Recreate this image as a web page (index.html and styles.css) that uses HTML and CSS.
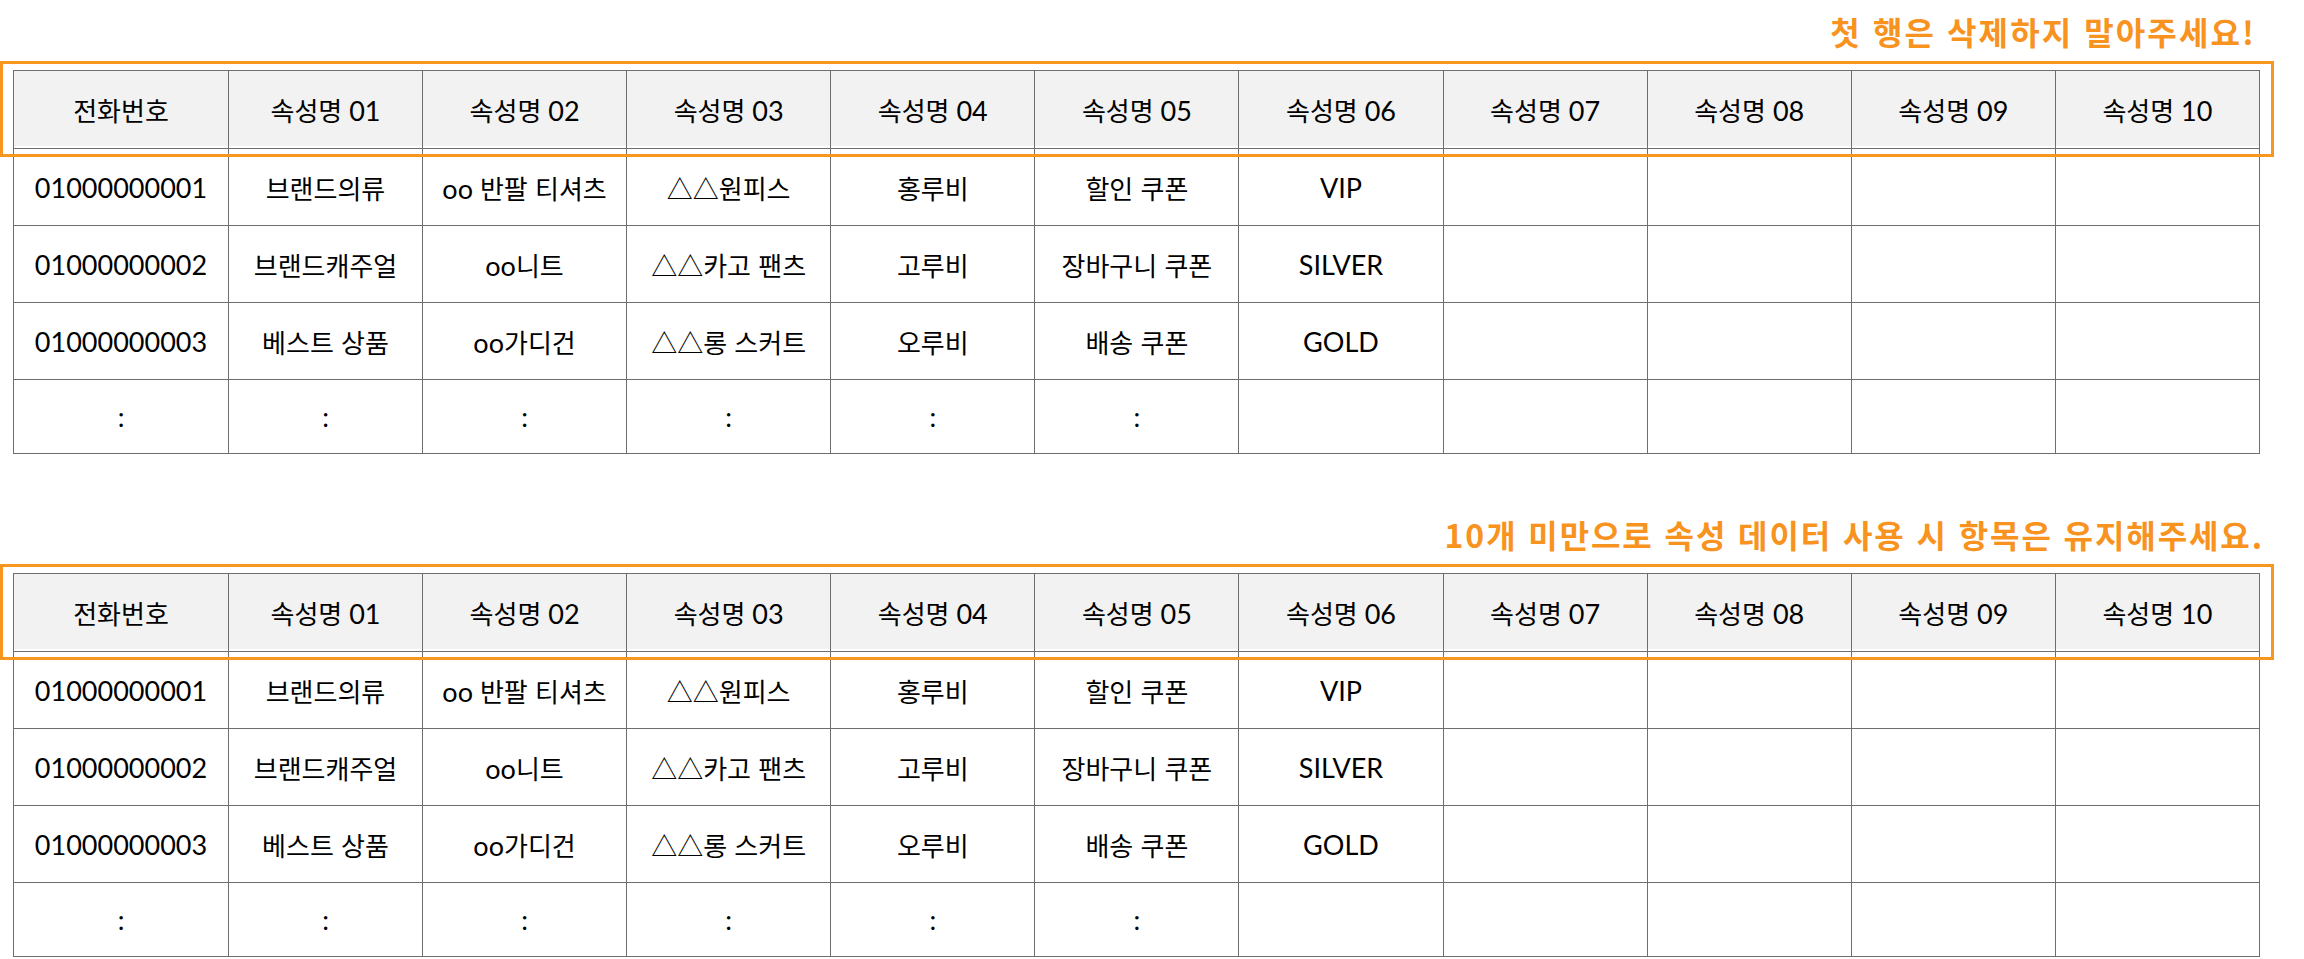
FILE: index.html
```html
<!DOCTYPE html>
<html lang="ko">
<head>
<meta charset="utf-8">
<title>속성 데이터 안내</title>
<link rel="stylesheet" href="styles.css">
</head>
<body>
<main class="page">
  <section class="sheet sheet-first">
    <p class="notice">첫 행은 삭제하지 말아주세요!</p>
    <div class="table-wrap">
      <div class="highlight"></div>
      <table class="grid">
        <thead>
          <tr>
            <th><span class="k">전화번호</span></th>
            <th><span class="k">속성명</span> 01</th>
            <th><span class="k">속성명</span> 02</th>
            <th><span class="k">속성명</span> 03</th>
            <th><span class="k">속성명</span> 04</th>
            <th><span class="k">속성명</span> 05</th>
            <th><span class="k">속성명</span> 06</th>
            <th><span class="k">속성명</span> 07</th>
            <th><span class="k">속성명</span> 08</th>
            <th><span class="k">속성명</span> 09</th>
            <th><span class="k">속성명</span> 10</th>
          </tr>
        </thead>
        <tbody>
          <tr>
            <td>01000000001</td>
            <td><span class="k">브랜드의류</span></td>
            <td>oo <span class="k">반팔 티셔츠</span></td>
            <td><span class="k">△△원피스</span></td>
            <td><span class="k">홍루비</span></td>
            <td><span class="k">할인 쿠폰</span></td>
            <td>VIP</td>
            <td></td><td></td><td></td><td></td>
          </tr>
          <tr>
            <td>01000000002</td>
            <td><span class="k">브랜드캐주얼</span></td>
            <td>oo<span class="k">니트</span></td>
            <td><span class="k">△△카고 팬츠</span></td>
            <td><span class="k">고루비</span></td>
            <td><span class="k">장바구니 쿠폰</span></td>
            <td>SILVER</td>
            <td></td><td></td><td></td><td></td>
          </tr>
          <tr>
            <td>01000000003</td>
            <td><span class="k">베스트 상품</span></td>
            <td>oo<span class="k">가디건</span></td>
            <td><span class="k">△△롱 스커트</span></td>
            <td><span class="k">오루비</span></td>
            <td><span class="k">배송 쿠폰</span></td>
            <td>GOLD</td>
            <td></td><td></td><td></td><td></td>
          </tr>
          <tr class="last">
            <td>:</td><td>:</td><td>:</td><td>:</td><td>:</td><td>:</td>
            <td></td><td></td><td></td><td></td><td></td>
          </tr>
        </tbody>
      </table>
    </div>
  </section>

  <section class="sheet sheet-second">
    <p class="notice">10개 미만으로 속성 데이터 사용 시 항목은 유지해주세요.</p>
    <div class="table-wrap">
      <div class="highlight"></div>
      <table class="grid">
        <thead>
          <tr>
            <th><span class="k">전화번호</span></th>
            <th><span class="k">속성명</span> 01</th>
            <th><span class="k">속성명</span> 02</th>
            <th><span class="k">속성명</span> 03</th>
            <th><span class="k">속성명</span> 04</th>
            <th><span class="k">속성명</span> 05</th>
            <th><span class="k">속성명</span> 06</th>
            <th><span class="k">속성명</span> 07</th>
            <th><span class="k">속성명</span> 08</th>
            <th><span class="k">속성명</span> 09</th>
            <th><span class="k">속성명</span> 10</th>
          </tr>
        </thead>
        <tbody>
          <tr>
            <td>01000000001</td>
            <td><span class="k">브랜드의류</span></td>
            <td>oo <span class="k">반팔 티셔츠</span></td>
            <td><span class="k">△△원피스</span></td>
            <td><span class="k">홍루비</span></td>
            <td><span class="k">할인 쿠폰</span></td>
            <td>VIP</td>
            <td></td><td></td><td></td><td></td>
          </tr>
          <tr>
            <td>01000000002</td>
            <td><span class="k">브랜드캐주얼</span></td>
            <td>oo<span class="k">니트</span></td>
            <td><span class="k">△△카고 팬츠</span></td>
            <td><span class="k">고루비</span></td>
            <td><span class="k">장바구니 쿠폰</span></td>
            <td>SILVER</td>
            <td></td><td></td><td></td><td></td>
          </tr>
          <tr>
            <td>01000000003</td>
            <td><span class="k">베스트 상품</span></td>
            <td>oo<span class="k">가디건</span></td>
            <td><span class="k">△△롱 스커트</span></td>
            <td><span class="k">오루비</span></td>
            <td><span class="k">배송 쿠폰</span></td>
            <td>GOLD</td>
            <td></td><td></td><td></td><td></td>
          </tr>
          <tr class="last">
            <td>:</td><td>:</td><td>:</td><td>:</td><td>:</td><td>:</td>
            <td></td><td></td><td></td><td></td><td></td>
          </tr>
        </tbody>
      </table>
    </div>
  </section>
</main>
</body>
</html>
```

FILE: styles.css
```css
* {
  box-sizing: border-box;
}

html, body {
  margin: 0;
  padding: 0;
  background: #ffffff;
}

body {
  font-family: "Lato", "Noto Sans CJK KR", sans-serif;
  color: #000000;
}

.page {
  display: flex;
  flex-direction: column;
  width: 2304px;
  padding-left: 13px;
}

.sheet {
  display: flex;
  flex-direction: column;
  width: 2247px;
}

.sheet-first {
  padding-top: 12px;
}

.sheet-second {
  padding-top: 61px;
}

.notice {
  margin: 0 0 20px 0;
  text-align: right;
  font-family: "Noto Sans CJK KR", sans-serif;
  font-weight: 700;
  font-size: 32px;
  line-height: 38px;
  letter-spacing: 2.1px;
  color: #f7931e;
  padding-right: 4px;
}

.sheet-second .notice {
  padding-right: 0;
  margin-right: -4px;
  letter-spacing: 1.9px;
}

.table-wrap {
  position: relative;
}

.highlight {
  position: absolute;
  left: -13px;
  top: -9px;
  width: 2274px;
  height: 96px;
  border: 3px solid #f7971f;
  pointer-events: none;
  z-index: 2;
}

.grid {
  width: 2247px;
  border-collapse: collapse;
  table-layout: fixed;
}

.grid th,
.grid td {
  border: 1px solid #6e6e6e;
  padding: 0;
  text-align: center;
  vertical-align: middle;
  font-size: 27px;
  font-weight: 400;
  color: #000000;
  white-space: nowrap;
}

.grid th {
  height: 78px;
  background: #f2f2f2;
  box-shadow: inset 0 -2px 0 #ffffff;
}

.grid td {
  height: 77px;
}

.grid tr.last td {
  height: 74px;
}

.grid th:nth-child(1) {
  width: 215px;
}

.grid th:nth-child(2) {
  width: 194px;
}

.k {
  font-family: "Noto Sans CJK KR", sans-serif;
  font-size: 26px;
}
```
